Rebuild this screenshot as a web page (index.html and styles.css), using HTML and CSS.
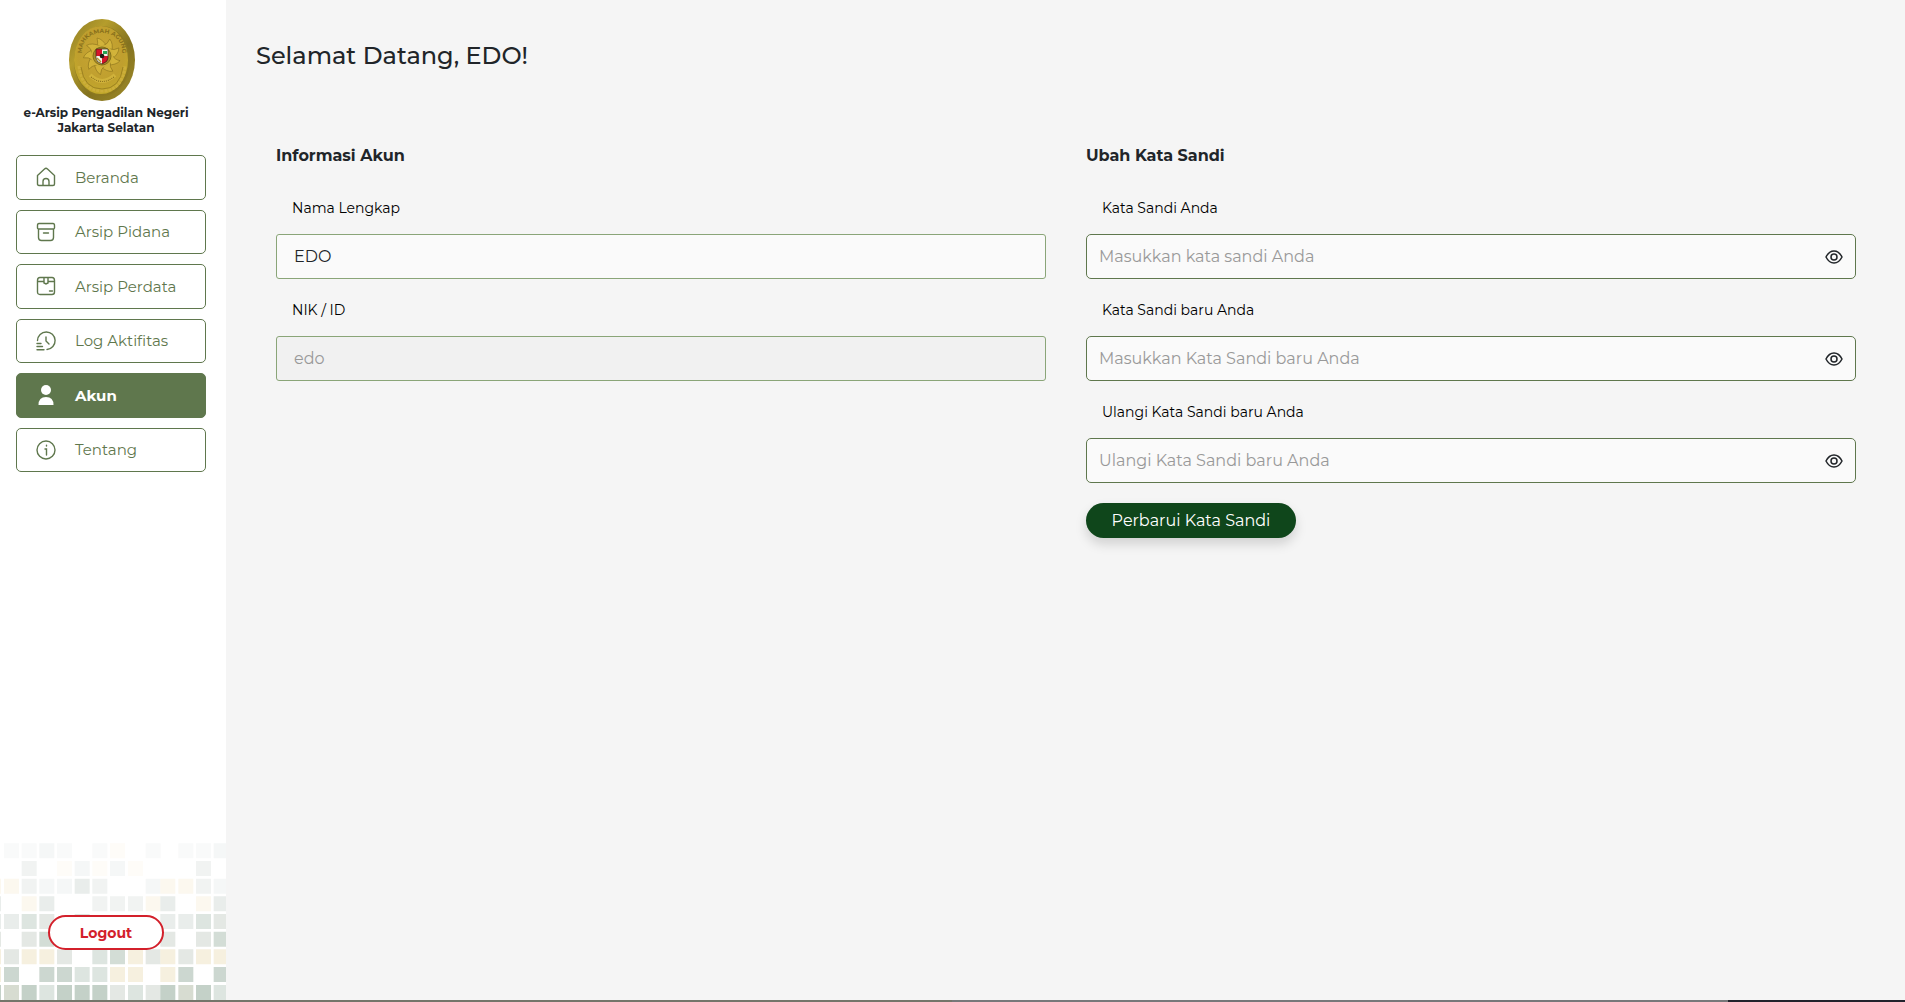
FILE: index.html
```html
<!DOCTYPE html>
<html lang="id">
<head>
<meta charset="utf-8">
<meta name="viewport" content="width=device-width, initial-scale=1">
<title>e-Arsip Pengadilan Negeri Jakarta Selatan</title>
<link rel="stylesheet" href="styles.css">
</head>
<body>
<div class="layout">
  <aside class="sidebar">
    <svg class="mosaic" viewBox="0 0 678 510" aria-hidden="true">
      <defs>
        <g id="tile">
          <path fill="#f9fafa" d="M12 40h45v45h-45zM65 40h45v45h-45zM277 40h45v45h-45zM437 40h45v45h-45zM171 40h45v45h-45z"/>
          <path fill="#f5f7f7" d="M118 40h45v45h-45zM330 93h45v45h-45zM224 93h45v45h-45zM118 146h45v45h-45zM171 146h45v45h-45zM437 146h45v45h-45z"/>
          <path fill="#fefcf8" d="M330 40h45v45h-45zM171 93h45v45h-45zM277 93h45v45h-45zM384 93h45v45h-45z"/>
          <path fill="#f1f3f2" d="M65 93h45v45h-45zM65 146h45v45h-45zM277 146h45v45h-45zM277 199h45v45h-45zM330 199h45v45h-45zM384 199h45v45h-45z"/>
          <path fill="#fcf8ef" d="M-42 146h45v45h-45zM12 146h45v45h-45zM65 199h45v45h-45zM437 199h45v45h-45z"/>
          <path fill="#e9edeb" d="M224 146h45v45h-45zM-42 199h45v45h-45zM118 199h45v45h-45zM-42 252h45v45h-45zM12 252h45v45h-45z"/>
          <path fill="#dde5e0" d="M65 252h45v45h-45zM224 252h45v45h-45zM277 358h45v45h-45zM277 411h45v45h-45zM224 411h45v45h-45zM118 465h45v45h-45zM384 465h45v45h-45z"/>
          <path fill="#e4e8e4" d="M118 252h45v45h-45zM-42 305h45v45h-45zM65 305h45v45h-45zM12 358h45v45h-45zM171 358h45v45h-45zM437 358h45v45h-45zM330 465h45v45h-45zM437 465h45v45h-45z"/>
          <path fill="#d3ddd6" d="M118 305h45v45h-45zM330 358h45v45h-45z"/>
          <path fill="#f6f0df" d="M-42 358h45v45h-45zM65 358h45v45h-45zM118 358h45v45h-45zM384 358h45v45h-45zM-42 411h45v45h-45zM330 411h45v45h-45zM384 411h45v45h-45z"/>
          <path fill="#ccd7d0" d="M12 411h45v45h-45zM118 411h45v45h-45zM171 411h45v45h-45z"/>
          <path fill="#c4d1c8" d="M-42 465h45v45h-45zM65 465h45v45h-45zM171 465h45v45h-45zM224 465h45v45h-45zM277 465h45v45h-45z"/>
          <path fill="#d7dcd1" d="M12 465h45v45h-45z"/>
        </g>
      </defs>
      <use href="#tile"/>
      <use href="#tile" x="523"/>
    </svg>
    <div class="brand">
      <svg class="emblem" viewBox="0 0 66 82" role="img" aria-label="Mahkamah Agung">
        <defs>
          <linearGradient id="rim" x1="0" y1="0" x2="1" y2="1">
            <stop offset="0" stop-color="#8d7b26"/><stop offset=".3" stop-color="#b59d2c"/><stop offset=".6" stop-color="#83721f"/><stop offset="1" stop-color="#a18c29"/>
          </linearGradient>
          <radialGradient id="gold" cx=".5" cy=".4" r=".6">
            <stop offset="0" stop-color="#c9a534"/><stop offset=".7" stop-color="#bf9f2e"/><stop offset="1" stop-color="#c3aa2a"/>
          </radialGradient>
          <path id="arc" d="M13 35C11 7 55 7 53 35"/>
          <path id="ray" d="M27 29Q30 24 28 19Q34 20 38 28z"/>
          <clipPath id="shieldclip"><path d="M27 30h12v9q0 4-6 6q-6-2-6-6z"/></clipPath>
        </defs>
        <ellipse cx="33" cy="41" rx="33" ry="41" fill="url(#rim)"/>
        <ellipse cx="33" cy="42" rx="28" ry="35" fill="#8c7820"/>
        <ellipse cx="32" cy="41" rx="27" ry="34" fill="url(#gold)"/>
        <text class="emblem-text"><textPath href="#arc" startOffset="50%">MAHKAMAH AGUNG</textPath></text>
        <g fill="#d2b33a" stroke="#8c731d" stroke-width=".6">
          <use href="#ray"/>
          <use href="#ray" transform="rotate(40 33 37)"/>
          <use href="#ray" transform="rotate(80 33 37)"/>
          <use href="#ray" transform="rotate(120 33 37)"/>
          <use href="#ray" transform="rotate(160 33 37)"/>
          <use href="#ray" transform="rotate(200 33 37)"/>
          <use href="#ray" transform="rotate(240 33 37)"/>
          <use href="#ray" transform="rotate(280 33 37)"/>
          <use href="#ray" transform="rotate(320 33 37)"/>
        </g>
        <circle cx="33" cy="37" r="11" fill="#cfb038"/>
        <circle cx="33" cy="37" r="9" fill="#a78a2b" stroke="#82701c"/>
        <g clip-path="url(#shieldclip)">
          <path fill="#d6152b" d="M27 30h6v7h-6zM33 37h6v9h-6z"/>
          <path fill="#f5f5e8" d="M33 30h6v7h-6zM27 37h6v9h-6z"/>
          <path fill="#26a653" d="M34 32h4v3h-4z"/>
          <path stroke="#b39830" stroke-width="1.500" d="M28 39l4 4"/>
        </g>
        <path d="M27 30h12v9q0 4-6 6q-6-2-6-6z" fill="none" stroke="#332b17" stroke-width=".7"/>
        <circle cx="33" cy="37" r="2.300" fill="#211d16"/>
        <path fill="none" stroke="#ccae3a" stroke-width="3" stroke-dasharray="3 1" d="M10 47q3 25 23 25q20 0 23-25"/>
        <path fill="none" stroke="#8c731d" stroke-width=".7" d="M12 48q3 22 21 22q18 0 21-22"/>
        <path fill="none" stroke="#d0b23b" stroke-width="4" d="M21 56q12 12 25 0"/>
        <path fill="none" stroke="#8c731d" stroke-width="1.200" stroke-dasharray="1 1" d="M22 58q11 9 23 0"/>
      </svg>
      <p class="brand-name">e-Arsip Pengadilan Negeri Jakarta Selatan</p>
    </div>
    <nav class="menu">
      <a class="menu-item" href="#beranda"><svg class="icon" viewBox="0 0 20 20"><path d="M1.500 8.500L8.500 2q1.500-1.300 3 0l7 6.500v8.500q0 1.500-1.500 1.500H3Q1.500 18.500 1.500 17zM7 18v-3.500a3 3 0 0 1 6 0V18"/></svg>Beranda</a>
      <a class="menu-item" href="#pidana"><svg class="icon" viewBox="0 0 20 20"><path d="M3 1.500h14q1.500 0 1.500 2V6q0 1-1.500 1H3Q1.500 7 1.500 6V3.500q0-2 1.500-2zM2.500 7v8.500q0 3 3 3h9q3 0 3-3V7M7.500 11h5"/></svg>Arsip Pidana</a>
      <a class="menu-item" href="#perdata"><svg class="icon" viewBox="0 0 20 20"><path d="M4 1.500h12q2.500 0 2.500 3V16q0 2.500-2.500 2.500H4Q1.500 18.500 1.500 16V4.500q0-3 2.500-3zM1.500 5.500h6M12.500 5.500h6M8 2v5l2 1l2-1V2M13.500 15h3"/></svg>Arsip Perdata</a>
      <a class="menu-item" href="#log"><svg class="icon" viewBox="0 0 20 20"><path d="M1.500 9.500a8.800 8.800 0 1 1 9.500 9M10 6v4l3 3M1 12.500h4M1 15.500h5.500M1 18.700h7"/></svg>Log Aktifitas</a>
      <a class="menu-item active" href="#akun" aria-current="page"><svg class="icon solid" viewBox="0 0 20 20"><circle cx="10" cy="5" r="5"/><path d="M2.500 20q0-8 7.500-8t7.500 8z"/></svg>Akun</a>
      <a class="menu-item" href="#tentang"><svg class="icon" viewBox="0 0 20 20"><circle cx="10" cy="10" r="9"/><path d="M9 9h1.500V15M10.500 5.200v.8"/></svg>Tentang</a>
    </nav>
    <button class="logout" type="button">Logout</button>
  </aside>
  <main class="content">
    <h1 class="welcome">Selamat Datang, EDO!</h1>
    <div class="panels">
      <section class="panel">
        <h2 class="panel-title">Informasi Akun</h2>
        <label class="label" for="nama">Nama Lengkap</label>
        <input class="input info" id="nama" type="text" value="EDO">
        <label class="label" for="nik">NIK / ID</label>
        <input class="input info" id="nik" type="text" value="edo" disabled>
      </section>
      <form class="panel">
        <h2 class="panel-title">Ubah Kata Sandi</h2>
        <label class="label" for="lama">Kata Sandi Anda</label>
        <div class="password"><input class="input" id="lama" type="password" placeholder="Masukkan kata sandi Anda"><button class="reveal" type="button" aria-label="Tampilkan"><svg class="eye" viewBox="0 0 18 14"><path d="M1 7q3-6 8-6t8 6q-3 6-8 6T1 7z"/><circle cx="9" cy="7" r="3"/></svg></button></div>
        <label class="label" for="baru">Kata Sandi baru Anda</label>
        <div class="password"><input class="input" id="baru" type="password" placeholder="Masukkan Kata Sandi baru Anda"><button class="reveal" type="button" aria-label="Tampilkan"><svg class="eye" viewBox="0 0 18 14"><path d="M1 7q3-6 8-6t8 6q-3 6-8 6T1 7z"/><circle cx="9" cy="7" r="3"/></svg></button></div>
        <label class="label" for="ulangi">Ulangi Kata Sandi baru Anda</label>
        <div class="password"><input class="input" id="ulangi" type="password" placeholder="Ulangi Kata Sandi baru Anda"><button class="reveal" type="button" aria-label="Tampilkan"><svg class="eye" viewBox="0 0 18 14"><path d="M1 7q3-6 8-6t8 6q-3 6-8 6T1 7z"/><circle cx="9" cy="7" r="3"/></svg></button></div>
        <button class="submit" type="button">Perbarui Kata Sandi</button>
      </form>
    </div>
  </main>
</div>
<footer class="strip"></footer>
</body>
</html>
```
FILE: styles.css
```css
* { box-sizing: border-box; }

body {
  margin: 0;
  min-height: 100vh;
  display: flex;
  flex-direction: column;
  background: #f5f5f5;
  color: #212529;
  font-family: Montserrat, Inter, sans-serif;
  font-size: 16px;
}

button, input { font: inherit; }

.layout { flex: 1; display: flex; }

.sidebar {
  position: relative;
  width: 226px;
  flex: none;
  display: flex;
  flex-direction: column;
  padding: 19px 14px 50px 0;
  background: #fff;
}

.mosaic {
  position: absolute;
  left: 0;
  bottom: 0;
  width: 100%;
}

.brand { text-align: center; padding: 0 20px; }

.emblem { display: block; width: 66px; height: 82px; margin: 0 0 4px 49px; }

.emblem-text {
  font-size: 6px;
  font-weight: 700;
  text-anchor: middle;
  fill: #8a711c;
}

.brand-name {
  margin: 0 0 20px;
  font-size: 12px;
  line-height: 15px;
  font-weight: 700;
}

.menu {
  display: grid;
  grid-auto-rows: 1fr;
  gap: 10px;
  height: 317px;
  margin: 0 6px 0 16px;
}

.menu-item {
  display: flex;
  align-items: center;
  gap: 19px;
  padding: 0 19px;
  border: 1px solid #5f774d;
  border-radius: 5px;
  background: #fff;
  color: #5f774d;
  font-size: 15px;
  font-weight: 400;
  text-decoration: none;
}

.menu-item.active { background: #5f774d; color: #fff; font-weight: 700; }

.icon {
  width: 20px;
  height: 20px;
  fill: none;
  stroke: currentColor;
  stroke-width: 1.4;
  stroke-linecap: round;
}

.icon.solid { fill: currentColor; stroke: none; }

.logout {
  position: relative;
  align-self: center;
  margin-top: auto;
  width: 116px;
  height: 35px;
  padding: 0;
  border: 2px solid #d3202b;
  border-radius: 18px;
  background: #fff;
  color: #d3202b;
  font-size: 14px;
  font-weight: 700;
}

.content { flex: 1; padding: 41px 49px 40px 30px; }

.welcome {
  margin: 0 0 75px;
  font-size: 24px;
  line-height: 30px;
  font-weight: 500;
}

.panels {
  display: grid;
  grid-template-columns: 1fr 1fr;
  gap: 40px;
  padding-left: 20px;
}

.panel { display: flex; flex-direction: column; }

.panel-title {
  margin: 0 0 11px;
  font-size: 16px;
  line-height: 20px;
  font-weight: 700;
}

.label {
  margin: 21px 16px 16px;
  font-size: 14px;
  line-height: 20px;
  font-weight: 400;
  color: #000;
}

.input {
  width: 100%;
  height: 45px;
  padding: 0 48px 0 12px;
  border: 1px solid #5f774d;
  border-radius: 5px;
  background: #fafafa;
  color: #212529;
  font-size: 16px;
  font-weight: 400;
}

.input.info { padding-left: 17px; border-color: #8aa578; border-radius: 3px; }
.input:disabled { background: #f1f1f1; color: #999; }
.input::placeholder { color: #999; opacity: 1; }

.password { position: relative; }

.reveal {
  position: absolute;
  top: 0;
  right: 13px;
  height: 45px;
  padding: 0;
  border: 0;
  background: none;
  display: flex;
  align-items: center;
}

.eye {
  width: 18px;
  height: 14px;
  fill: none;
  stroke: #212529;
  stroke-width: 1.5;
}

.submit {
  align-self: flex-start;
  width: 210px;
  height: 35px;
  margin-top: 20px;
  padding: 0;
  border: 0;
  border-radius: 18px;
  background: #0f461b;
  color: #fff;
  font-size: 16px;
  font-weight: 400;
  box-shadow: 0 6px 12px rgba(0, 0, 0, .15);
}

.strip {
  height: 2px;
  background: linear-gradient(90deg, #74756a 0 50%, #77787a 50% 90.7%, #22222c 90.7%);
}
```
